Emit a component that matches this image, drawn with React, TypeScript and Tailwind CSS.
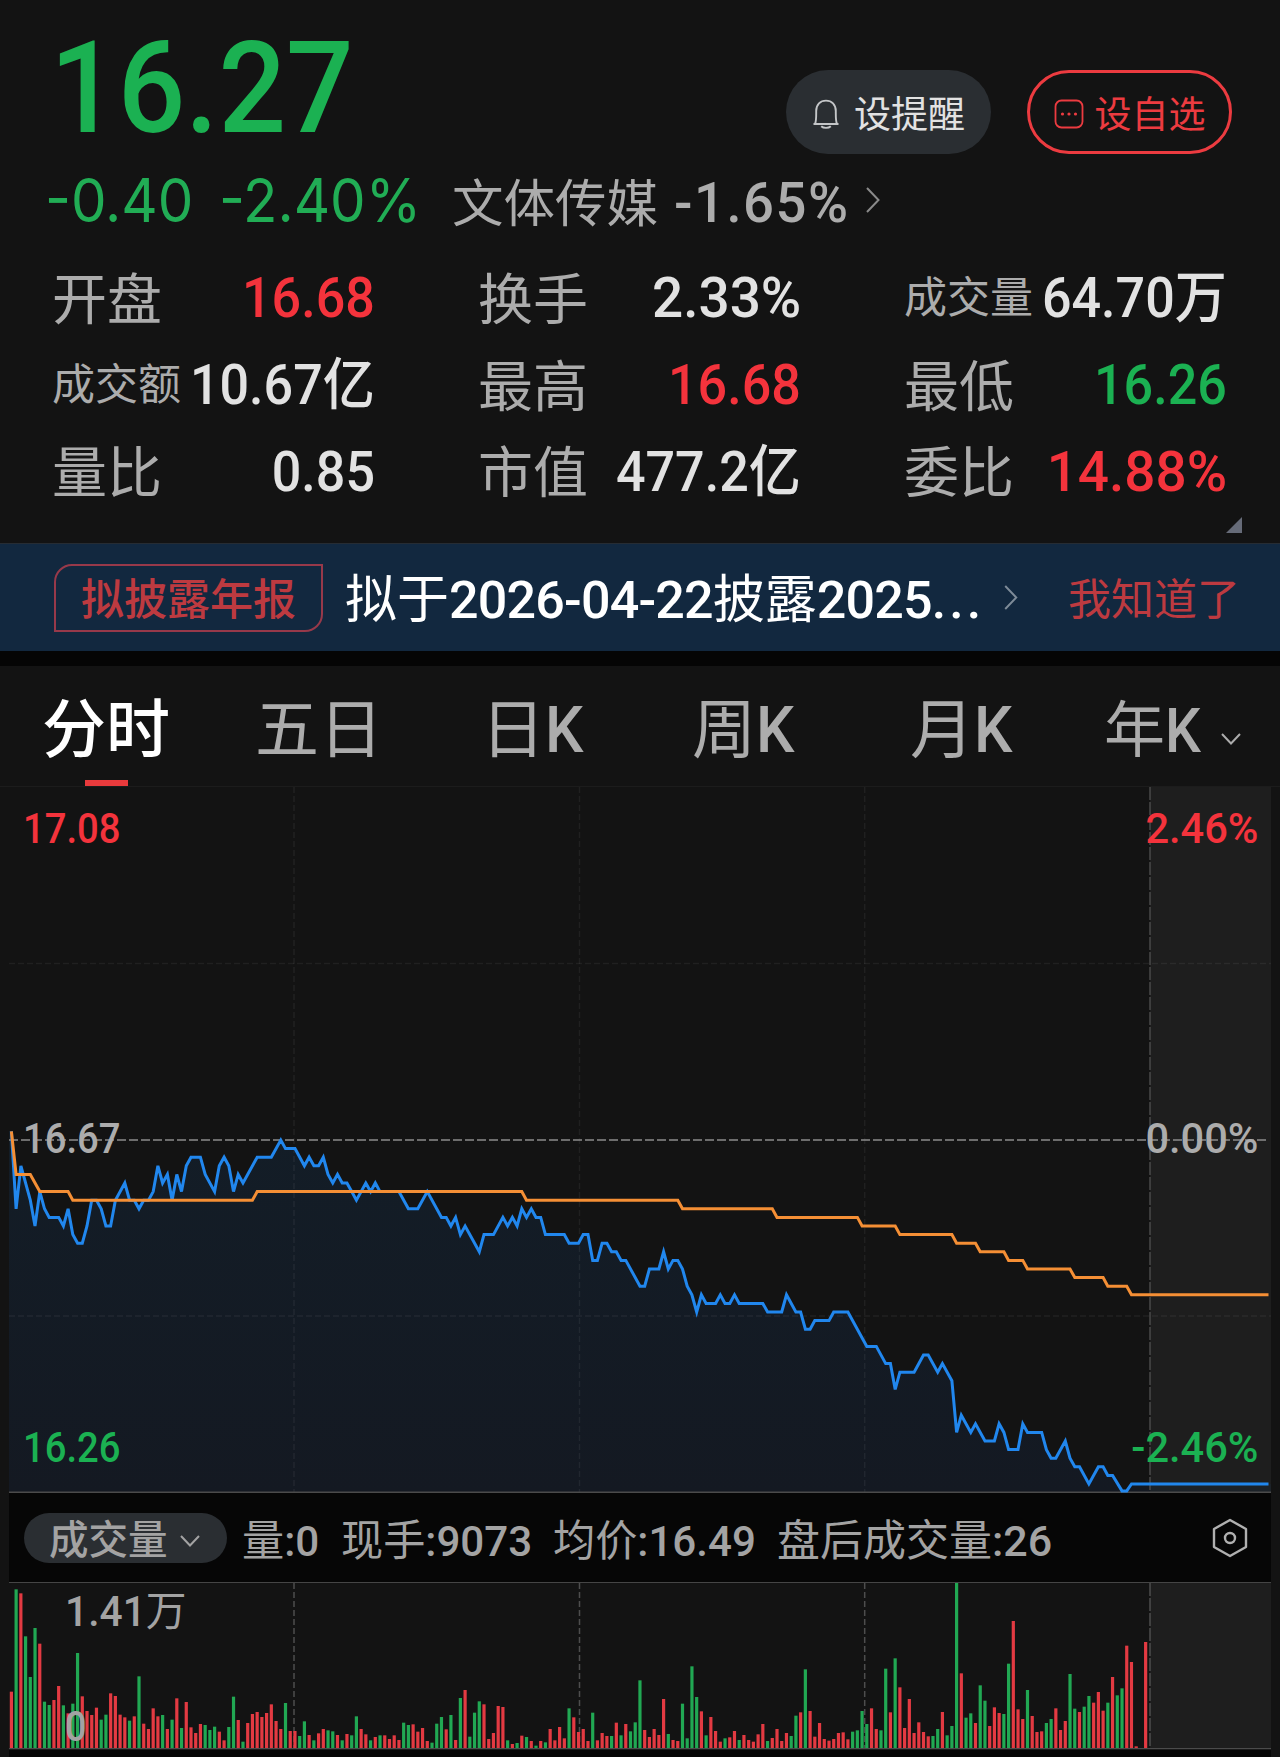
import type { ReactNode } from "react";
import clsx from "clsx";

type Tone = "up" | "down" | "plain";

interface Stat {
  label: string;
  value: string;
  tone: Tone;
}

const TONE_CLASS: Record<Tone, string> = {
  up: "text-[#f4333c]",
  down: "text-[#1bb152]",
  plain: "text-[#e2e2e2]",
};

const STATS: Stat[] = [
  { label: "开盘", value: "16.68", tone: "up" },
  { label: "换手", value: "2.33%", tone: "plain" },
  { label: "成交量", value: "64.70万", tone: "plain" },
  { label: "成交额", value: "10.67亿", tone: "plain" },
  { label: "最高", value: "16.68", tone: "up" },
  { label: "最低", value: "16.26", tone: "down" },
  { label: "量比", value: "0.85", tone: "plain" },
  { label: "市值", value: "477.2亿", tone: "plain" },
  { label: "委比", value: "14.88%", tone: "up" },
];

// [minute, ticks below the previous close]
const PRICE: [number, number][] = [
  [0, -1], [1, 8], [2, 3], [4, 7], [5, 10], [6, 6], [7, 8], [8, 9], [10, 9], [11, 10], [12, 8], [13, 11],
  [14, 12], [15, 12], [16, 10], [17, 7], [18, 7], [19, 8], [20, 10], [21, 10], [22, 7], [24, 5], [25, 7],
  [26, 7], [27, 8], [28, 7], [29, 7], [30, 6], [31, 3], [32, 5], [33, 4], [34, 7], [35, 4], [36, 6], [37, 3],
  [38, 2], [40, 2], [41, 4], [43, 6], [44, 3], [45, 2], [46, 3], [47, 6], [48, 4], [49, 5], [52, 2], [55, 2],
  [57, 0], [58, 1], [60, 1], [62, 3], [63, 2], [64, 3], [65, 3], [66, 2], [67, 4], [68, 5], [69, 4], [70, 5],
  [71, 5], [72, 6], [73, 7], [75, 5], [76, 6], [77, 5], [78, 6], [82, 6], [84, 8], [86, 8], [88, 6], [91, 9],
  [92, 9], [93, 10], [94, 9], [95, 11], [96, 10], [99, 13], [100, 11], [102, 11], [104, 9], [105, 10],
  [106, 9], [107, 10], [108, 8], [109, 9], [110, 8], [111, 9], [112, 9], [113, 11], [117, 11], [118, 12],
  [120, 12], [121, 11], [122, 11], [123, 14], [124, 14], [125, 12], [126, 12], [127, 13], [128, 13],
  [129, 14], [130, 14], [133, 17], [134, 17], [135, 15], [137, 15], [138, 13], [139, 15], [140, 14],
  [141, 14], [142, 15], [143, 17], [144, 18], [145, 20], [146, 18], [147, 19], [149, 19], [150, 18],
  [151, 19], [152, 19], [153, 18], [154, 19], [159, 19], [160, 20], [163, 20], [164, 18], [166, 20],
  [167, 20], [168, 22], [169, 22], [170, 21], [173, 21], [174, 20], [177, 20], [181, 24], [183, 24],
  [185, 26], [186, 26], [187, 29], [188, 27], [191, 27], [193, 25], [194, 25], [196, 27], [197, 26],
  [199, 28], [200, 34], [201, 32], [203, 34], [204, 33], [206, 35], [208, 35], [209, 33], [210, 34],
  [211, 36], [213, 36], [214, 33], [215, 34], [218, 34], [219, 36], [220, 37], [221, 37], [223, 35],
  [224, 37], [225, 38], [226, 38], [228, 40], [230, 38], [231, 38], [232, 39], [233, 39], [235, 40.8],
  [236, 40.8], [237, 40], [266, 40],
];

const AVERAGE: [number, number][] = [
  [0, -1], [1, 4], [4, 4], [6, 6], [12, 6], [13, 7], [51, 7], [52, 6], [108, 6], [109, 7], [141, 7], [142, 8],
  [161, 8], [162, 9], [179, 9], [180, 10], [187, 10], [188, 11], [199, 11], [200, 12], [204, 12], [205, 13],
  [210, 13], [211, 14], [214, 14], [215, 15], [224, 15], [225, 16], [231, 16], [232, 17], [236, 17],
  [237, 18], [266, 18],
];

// One bar a minute; negative bars are falling minutes
const VOLUME = [
  169, -476, 464, -335, -213, -360, 313, -139, -129, 144, 186, -128, 104, -133, -285, 155, 111, 99, 121, -85,
  -100, 164, 156, 100, 92, -82, 95, -215, 73, 57, 119, 95, -99, 57, -85, 149, -60, 138, 62, 45,
  72, -69, -54, -64, 49, 23, -63, -154, 84, -19, 75, 102, 108, 93, 105, 131, 81, 57, -135, 51,
  51, -36, -80, 39, -23, 44, 57, -53, -50, 39, -23, 42, -38, -95, 57, 41, -23, 33, -38, 38,
  27, 38, 24, -76, -69, 71, 49, 60, 21, -16, -73, -93, 56, -99, 24, -150, 174, -34, -106, -140,
  131, 27, 45, 126, 123, -23, 12, -15, 37, -33, 21, -7, 21, -17, 57, 23, 63, 29, -119, 92,
  48, 57, 21, -106, 23, 45, 36, -36, 76, -38, 72, -50, -77, -203, 54, 33, 57, 39, 147, -42,
  24, 21, -133, -29, -245, -153, 110, -38, 93, 51, 19, -29, 32, 51, -24, 39, 24, 19, 41, 72,
  -21, 30, 57, 21, 45, -36, -97, 107, -236, 111, 34, 75, 27, 22, 27, 45, 47, 26, -49, -53,
  -111, -72, 119, 57, -53, -238, 107, -269, 182, 60, 147, 45, 77, 48, 35, -36, -57, 108, -38, -66,
  -495, 224, -91, -104, 75, -188, -142, 66, 122, 105, -102, -253, 381, 116, 87, -174, 96, 48, 50, -75,
  -87, 119, 54, 81, -222, -118, 108, -124, -156, 136, 168, 112, -136, 213, -158, -179, 307, 258, 5, 0,
  318,
];
const VOLUME_MAX = 495;

const GRID_X = [294, 579.5, 864.7];
const CLOSE_X = 1150;
const RIGHT_X = 1271;

function minuteX(minute: number) {
  return 11.4 + minute * 4.726;
}

function toPoints(series: [number, number][]) {
  return series.map(([m, t]) => `${minuteX(m).toFixed(1)},${(353 + t * 8.6).toFixed(1)}`).join(" ");
}

function Chevron({ down, className }: { down?: boolean; className?: string }) {
  return (
    <svg
      viewBox={down ? "0 0 20 12" : "0 0 14 26"}
      className={clsx("shrink-0", className)}
      fill="none"
      stroke="currentColor"
      strokeWidth={2}
    >
      <path d={down ? "M1 1l9 9.5L19 1" : "M1 1l11.5 12L1 25"} />
    </svg>
  );
}

function BellIcon() {
  return (
    <svg viewBox="0 0 28 30" className="h-[30px] w-7 shrink-0" fill="none" stroke="#c4c6c8" strokeWidth={1.9}>
      <path d="M1.5 25H26.5M3 25C4.4 22 4.2 18 4.2 12C4.2 5.5 8.3 1.6 14 1.6S23.8 5.5 23.8 12C23.8 18 23.6 22 25 25" />
      <path d="M9.2 27.2C11.5 29.4 16.5 29.4 18.8 27.2" />
    </svg>
  );
}

function DotsBoxIcon() {
  return (
    <svg viewBox="0 0 30 30" className="size-[30px] shrink-0" fill="none" stroke="currentColor" strokeWidth={1.8}>
      <rect x="1.5" y="1.5" width="27" height="27" rx="6" />
      <g fill="currentColor" stroke="none">
        <circle cx="8.5" cy="15" r="1.6" />
        <circle cx="15" cy="15" r="1.6" />
        <circle cx="21.5" cy="15" r="1.6" />
      </g>
    </svg>
  );
}

function Header() {
  return (
    <header className="flex h-[543px] flex-col pt-6">
      <div className="flex h-[128px] items-start justify-between pl-[50px] pr-12">
        <div className="origin-left scale-x-[.93] text-[128px] font-medium leading-none text-[#1bb152]">16.27</div>
        <div className="mt-[46px] flex gap-9">
          <button className="flex h-[84px] w-[205px] items-center justify-center gap-3.5 rounded-full bg-[#2a2e32] pt-1 text-[37px] leading-none text-[#e2e2e2]">
            <BellIcon />
            <span className="pt-[3px]">设提醒</span>
          </button>
          <button className="flex h-[84px] w-[205px] items-center justify-center gap-[11px] rounded-full border-[3px] border-[#ec3b40] pt-1 text-[37px] leading-none text-[#ec3b40]">
            <DotsBoxIcon />
            <span className="pt-[3px]">设自选</span>
          </button>
        </div>
      </div>

      <div className="mt-[18px] flex h-[60px] items-baseline whitespace-nowrap pl-[45px] leading-none">
        <span className="w-[174px] origin-left scale-x-[.94] font-[Inter] text-[60px] text-[#21ad55]">-0.40</span>
        <span className="w-[233px] origin-left scale-x-[.94] font-[Inter] text-[60px] text-[#21ad55]">-2.40%</span>
        <span className="text-[51.5px] text-[#acacac]">文体传媒</span>
        <span className="ml-4 w-[192px] origin-left scale-x-[.99] text-[55px] font-medium tracking-[1.5px] text-[#acacac]">
          -1.65%
        </span>
        <Chevron className="h-[26px] w-3.5 self-center text-[#8a8a8a]" />
      </div>

      <div className="mt-[25px] grid grid-cols-3 gap-x-[103px] pl-[52px] pr-[53px]">
        {STATS.map(({ label, value, tone }) => (
          <div key={label} className="flex h-[86.7px] items-center whitespace-nowrap leading-none">
            <span className={clsx("w-0 text-[#acacac]", label.length > 2 ? "text-[43px]" : "pt-1 text-[55px]")}>
              {label}
            </span>
            <span
              className={clsx(
                "ml-auto origin-right text-[56px] font-medium",
                value.endsWith("%") ? "scale-x-[.98]" : "scale-x-[.93]",
                TONE_CLASS[tone],
              )}
            >
              {value}
            </span>
          </div>
        ))}
      </div>

      <svg viewBox="0 0 16 16" className="ml-[1226px] mt-0.5 size-4" fill="#666b78">
        <path d="M16 0V16H0Z" />
      </svg>
    </header>
  );
}

function NoticeBanner() {
  return (
    <div className="flex h-[108px] items-center whitespace-nowrap border-t border-[#262c33] bg-[#12283f] pl-[54px] leading-none">
      <span className="flex h-[68px] w-[269px] items-center justify-center rounded-br-[18px] rounded-tl-[18px] border-2 border-[#97394a] pt-1.5 text-[43px] font-medium text-[#bd3a40]">
        拟披露年报
      </span>
      <span className="ml-[22px] w-[659px] pt-1.5 text-[52px] text-white">
        拟于<b className="font-medium tracking-[-0.8px]">2026-04-22</b>披露
        <b className="font-medium tracking-[-0.8px]">2025</b>
        <b className="font-medium tracking-[3px]">...</b>
      </span>
      <Chevron className="h-[25px] w-3.5 text-[#7e8b98]" />
      <span className="ml-[50px] pt-1.5 text-[43px] text-[#bd3a40]">我知道了</span>
    </div>
  );
}

function Tab({ children, className }: { children: ReactNode; className?: string }) {
  return <span className={clsx("flex items-center pt-2.5", className)}>{children}</span>;
}

function PeriodTabs() {
  return (
    <nav className="flex h-[121px] whitespace-nowrap border-b border-[#1c1c1c] pl-[42px] text-[64px] leading-none text-[#acacac]">
      <Tab className="relative w-[213px] font-medium text-white">
        分时
        <i className="absolute bottom-0 left-[43px] h-1.5 w-[43px] bg-[#e93a3c]" />
      </Tab>
      <Tab className="w-[226px]">五日</Tab>
      <Tab className="w-[211px]">
        日<b className="origin-left scale-x-[.95] font-medium">K</b>
      </Tab>
      <Tab className="w-[218px]">
        周<b className="origin-left scale-x-[.95] font-medium">K</b>
      </Tab>
      <Tab className="w-[194px]">
        月<b className="origin-left scale-x-[.95] font-medium">K</b>
      </Tab>
      <Tab className="text-[61px]">
        <span className="w-[117px]">
          年<b className="inline-block origin-left scale-x-[.93] font-medium">K</b>
        </span>
        <Chevron down className="mt-4 h-3 w-5" />
      </Tab>
    </nav>
  );
}

function AxisLabels({ values, align }: { values: [string, string, string]; align: "left" | "right" }) {
  return (
    <div
      className={clsx(
        "absolute top-[21px] flex h-[666px] flex-col text-[42px] font-medium leading-none",
        align === "left" ? "left-[23px] origin-left scale-x-[.91]" : "right-[22px] origin-right scale-x-[.99] items-end",
      )}
    >
      <span className="text-[#f4333c]">{values[0]}</span>
      <span className="mt-[268px] text-[#acacac]">{values[1]}</span>
      <span className="mt-[267px] text-[#1bb152]">{values[2]}</span>
    </div>
  );
}

function PriceChart() {
  const price = toPoints(PRICE);
  return (
    <div className="relative h-[706px]">
      <svg viewBox="0 0 1280 706" className="block h-[706px] w-full" fill="none">
        <defs>
          <linearGradient id="area" x1="0" y1="0" x2="0" y2="1">
            <stop offset="0" stopColor="#131d27" />
            <stop offset="1" stopColor="#141922" />
          </linearGradient>
        </defs>
        <polygon points={`9,705 9,344 ${price} 1268.5,705`} fill="url(#area)" />
        <rect x={CLOSE_X} y="0" width={RIGHT_X - CLOSE_X} height="697" fill="#1e1e1e" />
        <rect x={CLOSE_X} y="697" width={RIGHT_X - CLOSE_X} height="8" fill="#1c2228" />
        <g stroke="#fff" strokeOpacity=".06" strokeWidth="1.5" strokeDasharray="6 3">
          {GRID_X.map((x) => (
            <path key={x} d={`M${x} 0V705`} />
          ))}
          <path d={`M9 176.5H${RIGHT_X}M9 529H${RIGHT_X}`} />
        </g>
        <path d={`M${CLOSE_X} 0V705`} stroke="#4a4a4a" strokeWidth="1.5" strokeDasharray="13 2" />
        <path d="M9 353H1269" stroke="#8c8c8c" strokeWidth="1.7" strokeDasharray="9 3" />
        <path d={`M9 705.3H${RIGHT_X}`} stroke="#4b4b4b" strokeWidth="1.4" />
        <polyline points={price} stroke="#2187ee" strokeWidth="3" />
        <polyline points={toPoints(AVERAGE)} stroke="#f58f35" strokeWidth="3" />
      </svg>
      <AxisLabels align="left" values={["17.08", "16.67", "16.26"]} />
      <AxisLabels align="right" values={["2.46%", "0.00%", "-2.46%"]} />
    </div>
  );
}

function InfoItem({ label, value, className }: { label: string; value: string; className: string }) {
  return (
    <span className={clsx("pt-[7px]", className)}>
      {label}
      <b className="font-medium">:{value}</b>
    </span>
  );
}

function VolumeInfo() {
  return (
    <div className="ml-[9px] mr-[9px] flex h-[90px] items-center whitespace-nowrap border-b border-[#454545] bg-[#060606] pl-[15px] text-[43px] leading-none text-[#a3a3a3]">
      <button className="flex h-[50px] w-[203px] items-center rounded-full bg-[#2a2e32] pl-[25px] pt-1.5 text-[39.5px] font-medium">
        成交量
        <Chevron down className="ml-3 h-3 w-5" />
      </button>
      <InfoItem label="量" value="0" className="ml-[15px] w-[99px] origin-left scale-x-[.98]" />
      <InfoItem label="现手" value="9073" className="w-[212px] origin-left scale-x-[.98]" />
      <InfoItem label="均价" value="16.49" className="w-[224px] origin-left scale-x-[.98]" />
      <InfoItem label="盘后成交量" value="26" className="w-[435px]" />
      <svg viewBox="0 0 36 40" className="h-10 w-9 shrink-0" fill="none" stroke="#b0b0b0" strokeWidth={2.4}>
        <path d="M18 2L34 11V29L18 38L2 29V11Z" strokeLinejoin="round" />
        <circle cx="18" cy="20" r="5" />
      </svg>
    </div>
  );
}

function VolumeChart() {
  return (
    <div className="relative h-[174px]">
      <svg viewBox="0 0 1280 174" className="block h-[174px] w-full">
        <rect x={CLOSE_X} y="0" width={RIGHT_X - CLOSE_X} height="166" fill="#1e1e1e" />
        <g stroke="#4d4d4d" strokeWidth="1.5">
          {GRID_X.map((x) => (
            <path key={x} d={`M${x} 0V165`} strokeDasharray="6 3" />
          ))}
          <path d={`M${CLOSE_X} 0V165`} strokeDasharray="13 2" />
        </g>
        {VOLUME.map((v, i) => {
          const height = (Math.abs(v) / VOLUME_MAX) * 165;
          return (
            <rect
              key={i}
              x={minuteX(i) - 1.6}
              y={165 - height}
              width="3.2"
              height={height}
              fill={v < 0 ? "#21a853" : "#e33a42"}
            />
          );
        })}
        <rect x="9" y="165" width={RIGHT_X - 9} height="1.5" fill="#4b4b4b" />
        <rect x="9" y="166.5" width={RIGHT_X - 9} height="8" fill="#060606" />
      </svg>
      <div className="absolute left-[65px] top-2 text-[42px] leading-none text-[#a3a3a3]">
        <div className="origin-left scale-x-[.97]">
          <b className="font-medium">1.41</b>万
        </div>
        <div className="mt-[73px] origin-left scale-x-[.9] font-medium">0</div>
      </div>
    </div>
  );
}

export default function App() {
  return (
    <div className="h-[1757px] w-[1280px] overflow-hidden bg-[#131313] font-[Roboto,'Noto_Sans_CJK_SC',sans-serif]">
      <Header />
      <NoticeBanner />
      <div className="h-[15px] bg-[#050505]" />
      <PeriodTabs />
      <PriceChart />
      <VolumeInfo />
      <VolumeChart />
    </div>
  );
}
